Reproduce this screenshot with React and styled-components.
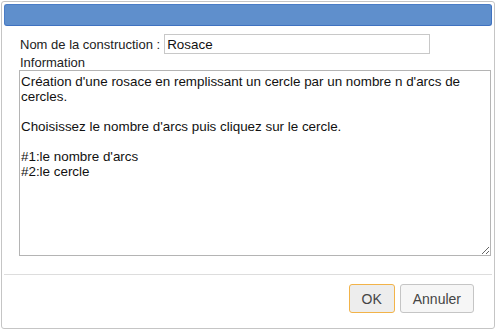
import React from "react";
import styled, { createGlobalStyle } from "styled-components";

const GlobalStyle = createGlobalStyle`
  html, body {
    margin: 0;
    padding: 0;
    background: #fff;
  }
  body {
    font-family: "Liberation Sans", Arial, sans-serif;
  }
`;

const Dialog = styled.div`
  box-sizing: border-box;
  margin: 1px 0 0 1px;
  width: 494px;
  height: 328px;
  border: 1px solid #c5c5c5;
  border-radius: 3px;
  padding: 2px;
  background: #fff;
  display: flex;
  flex-direction: column;
  font-size: 13px;
  color: #333;
`;

const TitleBar = styled.div`
  box-sizing: border-box;
  height: 22px;
  background: #5f8fcc;
  border: 1px solid #4a7dc6;
  border-bottom-color: #3f72c0;
  border-right-color: #3f72c0;
  border-radius: 3px;
`;

const Content = styled.div`
  display: flex;
  flex-direction: column;
  padding: 8px 0 0 16px;
`;

const NameRow = styled.div`
  display: flex;
  align-items: center;
  height: 20px;
`;

const Label = styled.label`
  font-size: 13px;
  color: #222;
  margin-right: 4px;
`;

const TextInput = styled.input`
  box-sizing: border-box;
  width: 266px;
  height: 20px;
  border: 1px solid #c8c8c8;
  padding: 0 2px;
  font: 13.4px "Liberation Sans", Arial, sans-serif;
  color: #111;
  outline: none;
`;

const InfoLabel = styled.div`
  font-size: 13px;
  color: #222;
  line-height: 15px;
  margin-top: 1px;
`;

const InfoArea = styled.textarea`
  box-sizing: border-box;
  margin: 0 0 0 -1px;
  width: 472px;
  height: 186px;
  border: 1px solid #b4b4b4;
  padding: 3px 1px;
  font: 13.4px/15px "Liberation Sans", Arial, sans-serif;
  color: #111;
  resize: both;
  outline: none;
`;

const ButtonPane = styled.div`
  margin-top: 18px;
  border-top: 1px solid #ddd;
  display: flex;
  justify-content: flex-end;
  gap: 5px;
  padding: 9px 18px 0 0;
`;

const Button = styled.button`
  box-sizing: border-box;
  height: 29px;
  padding: 0 12px;
  border: 1px solid ${(p) => (p.$focused ? "#f2b349" : "#c5c5c5")};
  border-radius: 3px;
  background: ${(p) => (p.$focused ? "#ededed" : "#f6f6f6")};
  color: #454545;
  font: 14px "Liberation Sans", Arial, sans-serif;
`;

export default function App() {
  const info =
    "Création d'une rosace en remplissant un cercle par un nombre n d'arcs de cercles.\n\nChoisissez le nombre d'arcs puis cliquez sur le cercle.\n\n#1:le nombre d'arcs\n#2:le cercle";
  return (
    <>
      <GlobalStyle />
      <Dialog>
        <TitleBar />
        <Content>
          <NameRow>
            <Label>Nom de la construction :</Label>
            <TextInput defaultValue="Rosace" />
          </NameRow>
          <InfoLabel>Information</InfoLabel>
          <InfoArea defaultValue={info} />
        </Content>
        <ButtonPane>
          <Button $focused>OK</Button>
          <Button>Annuler</Button>
        </ButtonPane>
      </Dialog>
    </>
  );
}
